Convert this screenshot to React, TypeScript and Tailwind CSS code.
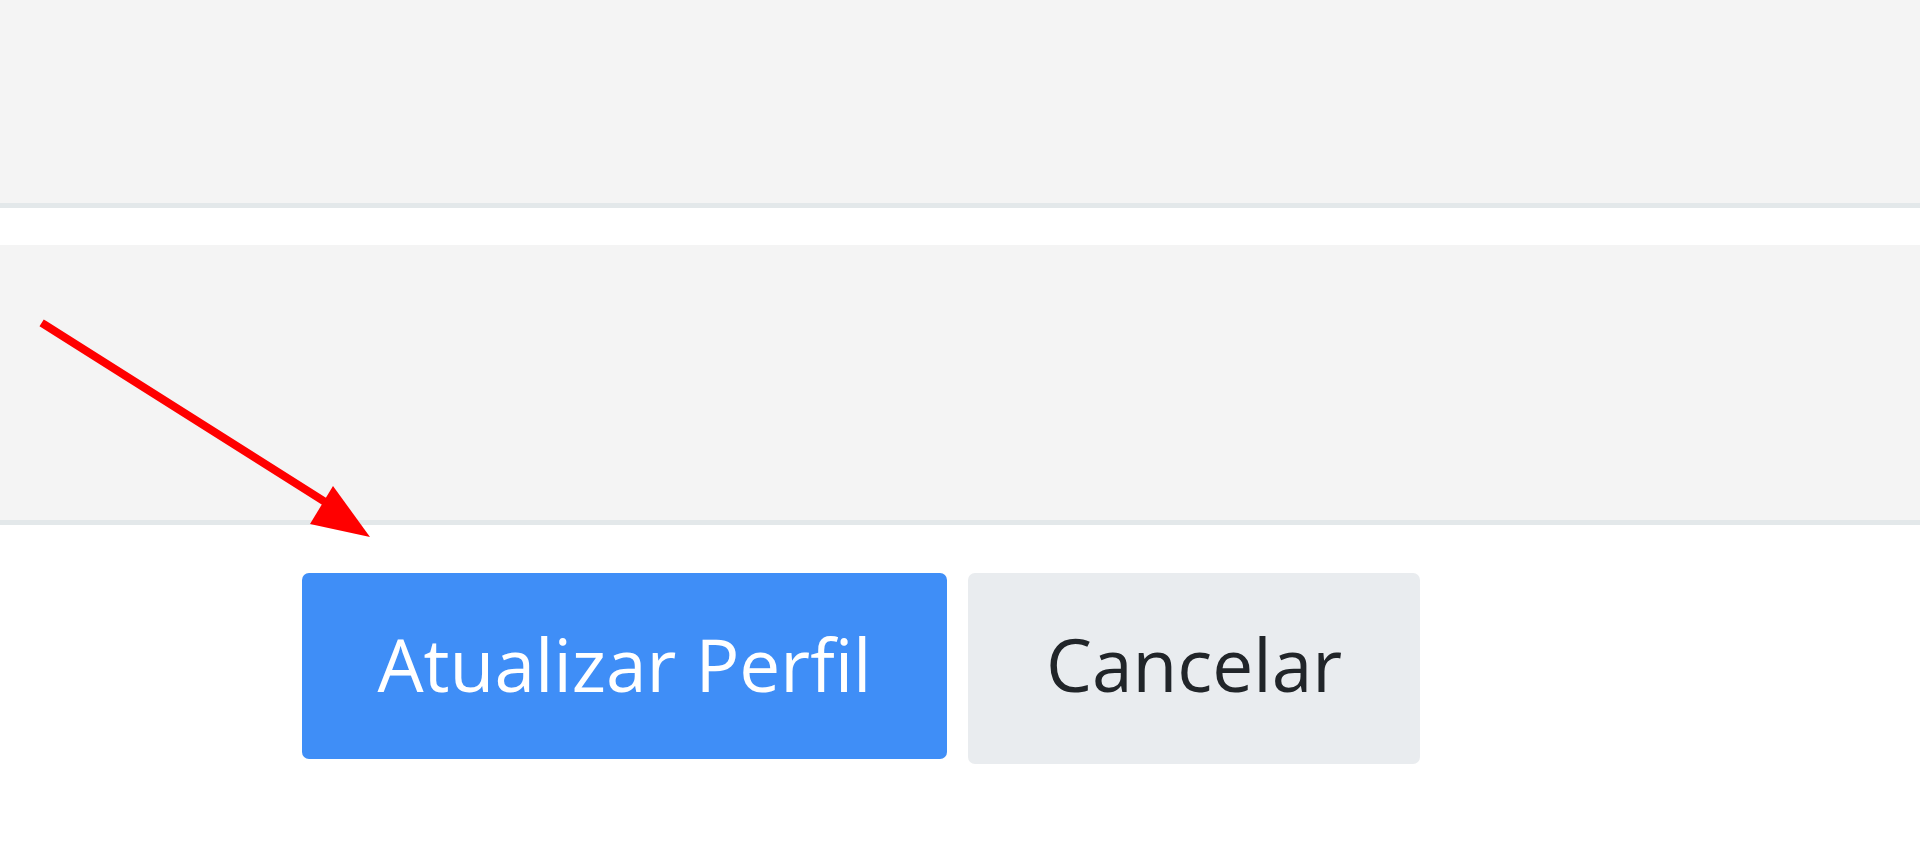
export default function App() {
  return (
    <div className="relative w-full h-[864px] bg-white overflow-hidden font-['Open_Sans',sans-serif]">
      {/* upper panel */}
      <div className="h-[208px] bg-[#f4f4f4] border-b-[5px] border-[#e3e8ea]" />

      {/* lower panel */}
      <div className="mt-[37px] h-[280px] bg-[#f4f4f4] border-b-[5px] border-[#e3e8ea]" />

      {/* actions */}
      <div className="mt-[48px] pl-[302px] flex items-start gap-[21px]">
        <button className="w-[645px] h-[186px] rounded-[7px] bg-[#3f8ef7] text-white text-[73px] leading-[73px] pt-[54px] flex justify-center">
          Atualizar Perfil
        </button>
        <button className="w-[452px] h-[191px] rounded-[7px] bg-[#e9ecef] text-[#212529] text-[73px] leading-[73px] pt-[54px] flex justify-center">
          Cancelar
        </button>
      </div>

      {/* annotation arrow */}
      <svg className="absolute left-0 top-0" width="1920" height="864" viewBox="0 0 1920 864">
        <line x1="45" y1="325" x2="322" y2="500" stroke="#ff0000" strokeWidth="8" strokeLinecap="square" />
        <polygon points="333,486 310,524 370,537" fill="#ff0000" />
      </svg>
    </div>
  );
}
